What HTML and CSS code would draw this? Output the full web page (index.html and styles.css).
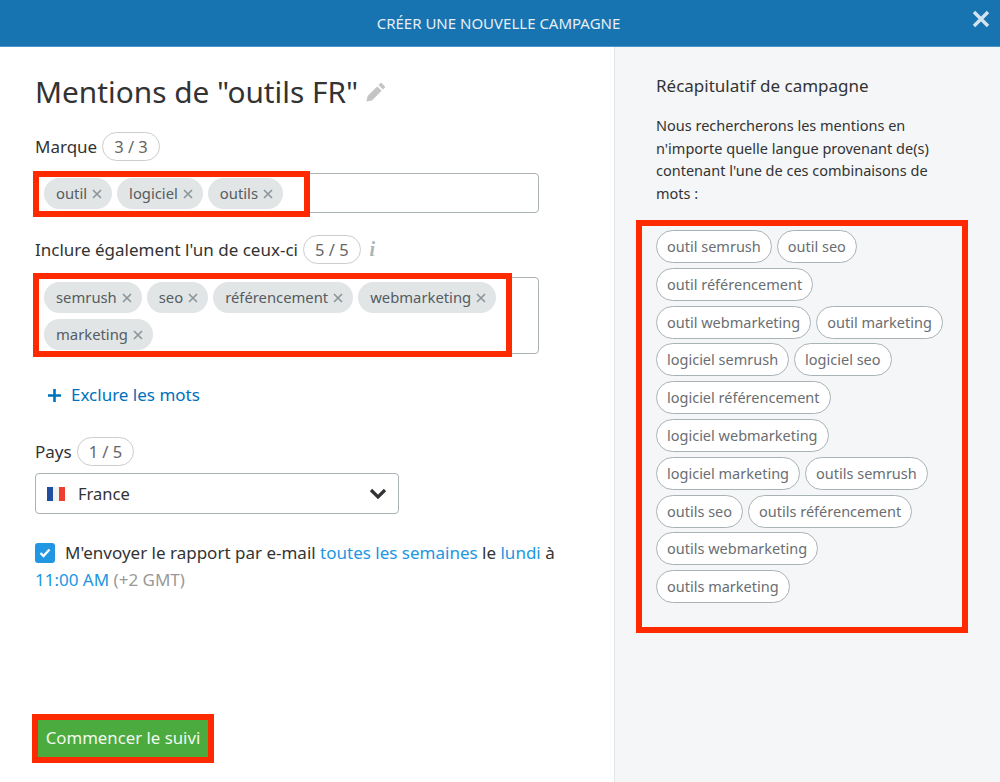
FILE: index.html
```html
<!DOCTYPE html>
<html lang="fr">
<head>
    <meta charset="UTF-8">
    <title>Créer une nouvelle campagne</title>
    <link rel="stylesheet" href="styles.css">
</head>
<body>
    <div class="modal">
        <div class="modal-header">
            <span>CRÉER UNE NOUVELLE CAMPAGNE</span>
            <svg class="close" viewBox="0 0 18 18"><path d="M2 2l14 14M16 2L2 16"/></svg>
        </div>
        <div class="modal-body">
            <div class="form">
                <h1>Mentions de "outils FR"
                    <svg class="pencil" viewBox="0 0 20 20"><path d="M14.4 1.2a1 1 0 0 1 1.4 0l3 3a1 1 0 0 1 0 1.4l-1.9 1.9-4.4-4.4zM11.2 4.4l4.4 4.4-9.6 9.6-5.6 1.2 1.2-5.6z"/></svg>
                </h1>

                <div class="label label-first">Marque <span class="count">3 / 3</span></div>
                <div class="tag-input">
                    <span class="tag">outil <svg viewBox="0 0 10 10"><path d="M1 1l8 8M9 1L1 9"/></svg></span>
                    <span class="tag">logiciel <svg viewBox="0 0 10 10"><path d="M1 1l8 8M9 1L1 9"/></svg></span>
                    <span class="tag">outils <svg viewBox="0 0 10 10"><path d="M1 1l8 8M9 1L1 9"/></svg></span>
                </div>

                <div class="label label-second">Inclure également l'un de ceux-ci <span class="count">5 / 5</span> <i class="info">i</i></div>
                <div class="tag-input tag-input-second">
                    <span class="tag">semrush <svg viewBox="0 0 10 10"><path d="M1 1l8 8M9 1L1 9"/></svg></span>
                    <span class="tag">seo <svg viewBox="0 0 10 10"><path d="M1 1l8 8M9 1L1 9"/></svg></span>
                    <span class="tag">référencement <svg viewBox="0 0 10 10"><path d="M1 1l8 8M9 1L1 9"/></svg></span>
                    <span class="tag">webmarketing <svg viewBox="0 0 10 10"><path d="M1 1l8 8M9 1L1 9"/></svg></span>
                    <span class="tag">marketing <svg viewBox="0 0 10 10"><path d="M1 1l8 8M9 1L1 9"/></svg></span>
                </div>

                <a class="exclude">
                    <svg viewBox="0 0 12 12"><path d="M6 0v12M0 6h12"/></svg>
                    Exclure les mots
                </a>

                <div class="label label-country">Pays <span class="count">1 / 5</span></div>
                <div class="select">
                    <svg class="flag" viewBox="0 0 18 14">
                        <rect width="6" height="14" fill="#1f4e9e"/>
                        <rect x="6" width="6" height="14" fill="#f0f0f0"/>
                        <rect x="12" width="6" height="14" fill="#ee3e32"/>
                    </svg>
                    <span class="select-value">France</span>
                    <svg class="chevron" viewBox="0 0 18 12"><path d="M2 2l7 7 7-7"/></svg>
                </div>

                <div class="report">
                    <span class="checkbox"><svg viewBox="0 0 12 10"><path d="M1.5 5l3 3 6-6.5"/></svg></span>
                    M'envoyer le rapport par e-mail <a>toutes les semaines</a> le <a>lundi</a> à<br>
                    <a>11:00 AM</a> <span class="muted">(+2 GMT)</span>
                </div>

                <button class="start">Commencer le suivi</button>
            </div>

            <div class="summary">
                <h3>Récapitulatif de campagne</h3>
                <p>Nous rechercherons les mentions en n'importe quelle langue provenant de(s) contenant l'une de ces combinaisons de mots :</p>
                <div class="chips">
                    <span class="chip">outil semrush</span>
                    <span class="chip">outil seo</span>
                    <span class="chip">outil référencement</span>
                    <span class="chip">outil webmarketing</span>
                    <span class="chip">outil marketing</span>
                    <span class="chip">logiciel semrush</span>
                    <span class="chip">logiciel seo</span>
                    <span class="chip">logiciel référencement</span>
                    <span class="chip">logiciel webmarketing</span>
                    <span class="chip">logiciel marketing</span>
                    <span class="chip">outils semrush</span>
                    <span class="chip">outils seo</span>
                    <span class="chip">outils référencement</span>
                    <span class="chip">outils webmarketing</span>
                    <span class="chip">outils marketing</span>
                </div>
            </div>
        </div>

        <!-- red annotations drawn on top of the screenshot -->
        <div class="mark mark-brand"></div>
        <div class="mark mark-include"></div>
        <div class="mark mark-chips"></div>
        <div class="mark mark-start"></div>
    </div>
</body>
</html>
```

FILE: styles.css
```css
* {
    box-sizing: border-box;
}
body {
    margin: 0;
    font-family: "Noto Sans", Arial, sans-serif;
    font-size: 17px;
    color: #333;
    background: #fff;
}
.modal {
    position: relative;
    width: 1000px;
    height: 782px;
    overflow: hidden;
    display: flex;
    flex-direction: column;
}
.modal-header {
    position: relative;
    height: 47px;
    flex: none;
    display: flex;
    align-items: center;
    justify-content: center;
    padding-right: 3px;
    background: #1873b1;
    border-bottom: 1px solid #4f94c6;
    color: #e4eff7;
    font-size: 15px;
}
.close {
    position: absolute;
    top: 10px;
    right: 10px;
    width: 18px;
    height: 18px;
    fill: none;
    stroke: #d3e4f0;
    stroke-width: 3.4;
}
.modal-body {
    flex: 1;
    display: flex;
    min-height: 0;
}
.form {
    width: 614px;
    flex: none;
    padding: 26px 0 25px 35px;
    display: flex;
    flex-direction: column;
    align-items: flex-start;
}
h1 {
    margin: 0;
    font-size: 29.8px;
    font-weight: 400;
    line-height: 38px;
    color: #333;
    display: flex;
    align-items: center;
    gap: 8px;
}
.pencil {
    width: 20px;
    height: 20px;
    fill: #c4c4c4;
}
.label {
    display: flex;
    align-items: center;
    gap: 5px;
    height: 29px;
}
.label-first {
    margin-top: 21px;
}
.label-second {
    margin-top: 22px;
}
.label-country {
    margin-top: 30px;
}
.count {
    height: 29px;
    padding: 0 11px;
    display: flex;
    align-items: center;
    border: 1px solid #ccc;
    border-radius: 15px;
    color: #666;
    background: #fff;
    font-size: 16.5px;
}
.info {
    margin-left: 4px;
    font-family: "Liberation Serif", serif;
    font-weight: 700;
    font-size: 20px;
    color: #a9b4b8;
}
.tag-input {
    width: 504px;
    margin-top: 12px;
    padding: 4px 8px 3px;
    display: flex;
    flex-wrap: wrap;
    gap: 6px 5px;
    background: #fff;
    border: 1px solid #aab2b6;
    border-radius: 4px;
}
.tag-input-second {
    margin-top: 13px;
}
.tag {
    height: 31px;
    padding: 0 10px 2px 12px;
    display: flex;
    align-items: center;
    gap: 5px;
    border-radius: 16px;
    background: #e1e5e6;
    color: #555c62;
    font-size: 14.8px;
}
.tag svg {
    width: 10px;
    height: 10px;
    margin-top: 2px;
    fill: none;
    stroke: #8b9498;
    stroke-width: 1.6;
}
.exclude {
    margin: 29px 0 0 13px;
    display: flex;
    align-items: center;
    gap: 10px;
    color: #0071bc;
    line-height: 24px;
}
.exclude svg {
    width: 13px;
    height: 13px;
    fill: none;
    stroke: #0071bc;
    stroke-width: 2.4;
}
.select {
    width: 364px;
    height: 41px;
    margin-top: 7px;
    padding: 0 11px;
    display: flex;
    align-items: center;
    background: #fff;
    border: 1px solid #aab2b6;
    border-radius: 4px;
}
.flag {
    width: 18px;
    height: 14px;
}
.select-value {
    margin-left: 13px;
    flex: 1;
    font-size: 16.5px;
}
.chevron {
    width: 18px;
    height: 12px;
    fill: none;
    stroke: #333;
    stroke-width: 3.2;
}
.report {
    position: relative;
    margin-top: 26px;
    line-height: 26.5px;
    text-indent: 30px;
}
.report a {
    color: #2196e3;
}
.muted {
    color: #999;
}
.checkbox {
    position: absolute;
    left: 0;
    top: 3px;
    width: 20px;
    height: 20px;
    text-indent: 0;
    display: flex;
    align-items: center;
    justify-content: center;
    border-radius: 3px;
    background: #2196e3;
}
.checkbox svg {
    width: 12px;
    height: 10px;
    fill: none;
    stroke: #fff;
    stroke-width: 2.4;
}
.start {
    margin: auto 0 0 3px;
    width: 170px;
    height: 37px;
    border: none;
    padding: 0 0 2px;
    background: #4bab3f;
    color: #f2f9f0;
    font-family: inherit;
    font-size: 16.8px;
}
.summary {
    flex: 1;
    padding: 26px 40px 0 41px;
    background: #f4f6f8;
    border-left: 1px solid #e2e6ea;
}
h3 {
    margin: 0;
    font-size: 17px;
    font-weight: 400;
    line-height: 26px;
    color: #333;
}
.summary p {
    margin: 15px 0 0;
    font-size: 14.5px;
    line-height: 22.6px;
}
.chips {
    width: 295px;
    margin-top: 25.6px;
    display: flex;
    flex-wrap: wrap;
    gap: 4.8px 5px;
}
.chip {
    height: 33px;
    padding: 0 10px 1px;
    display: flex;
    align-items: center;
    background: #fff;
    border: 1px solid #a9b3b5;
    border-radius: 17px;
    color: #6a6e72;
    font-size: 14.5px;
}
.mark {
    position: absolute;
    border: 6px solid #ff2a00;
}
.mark-brand {
    left: 33px;
    top: 171px;
    width: 277px;
    height: 46px;
}
.mark-include {
    left: 33px;
    top: 273px;
    width: 479px;
    height: 84px;
}
.mark-chips {
    left: 636px;
    top: 220px;
    width: 332px;
    height: 413px;
}
.mark-start {
    left: 32px;
    top: 714px;
    width: 182px;
    height: 49px;
}
```
